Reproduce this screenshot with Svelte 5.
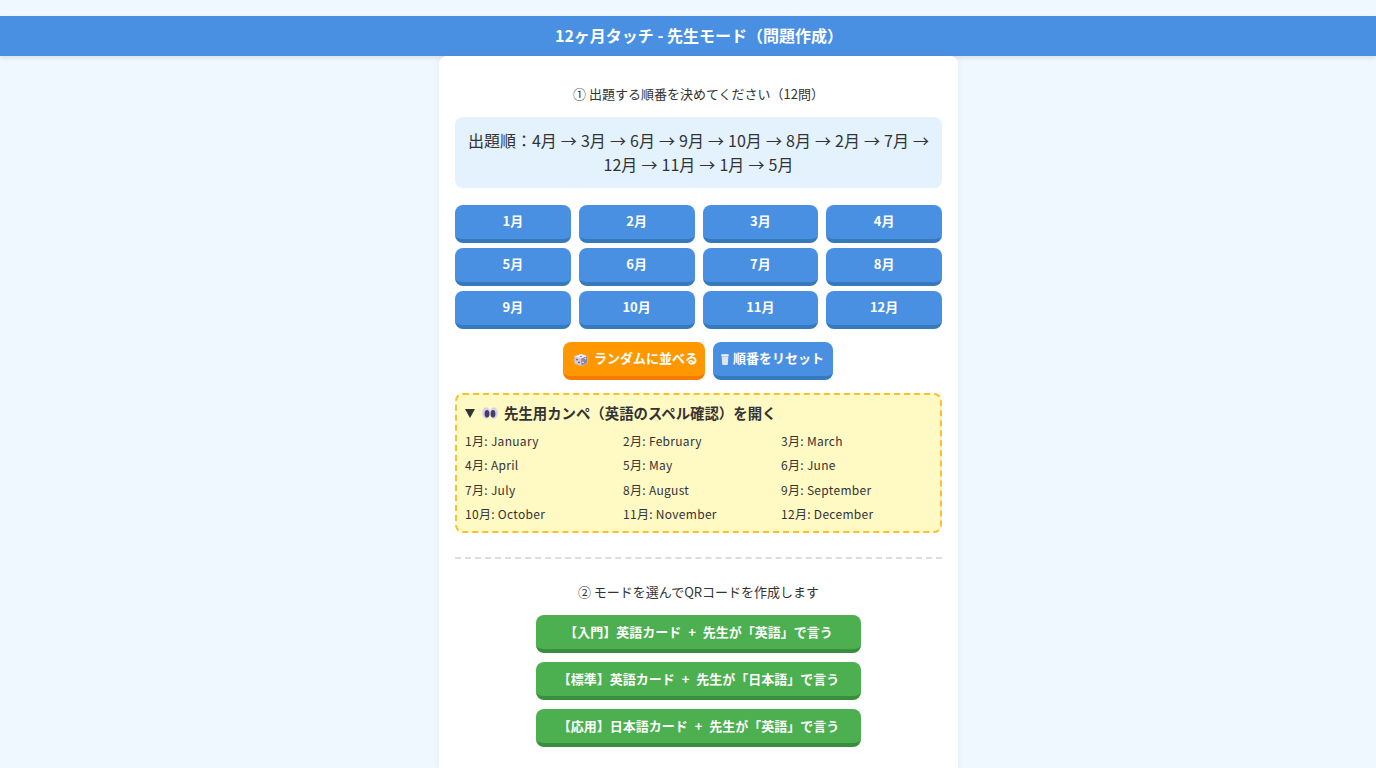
<script>
    const months = ['January', 'February', 'March', 'April', 'May', 'June', 'July', 'August', 'September', 'October', 'November', 'December']
    const order = [4, 3, 6, 9, 10, 8, 2, 7, 12, 11, 1, 5]
    const modes = [
        '【入門】英語カード + 先生が「英語」で言う',
        '【標準】英語カード + 先生が「日本語」で言う',
        '【応用】日本語カード + 先生が「英語」で言う'
    ]
</script>

<header class="bar">12ヶ月タッチ - 先生モード（問題作成）</header>

<main class="card">
    <p class="step">① 出題する順番を決めてください（12問）</p>
    <div class="order">出題順：{order.map((m) => m + '月').join(' → ')}</div>

    <div class="months">
        {#each months as _, i}
            <button class="btn month">{i + 1}月</button>
        {/each}
    </div>

    <div class="actions">
        <button class="btn action orange">
            <svg class="emoji" viewBox="0 0 14 12">
                <path d="M7 .3 13 2.2 13.3 8.6 7.4 11.8 1 9.2.7 2.4Z" fill="#cfc9da" stroke="#cfc9da" stroke-linejoin="round" />
                <path d="M7 .3 13 2.2 7.2 4.6.7 2.4Z" fill="#f2eff6" />
                <path d="M7.2 4.6 13 2.2 13.3 8.6 7.4 11.8Z" fill="#8f86a0" />
                <ellipse cx="7" cy="2.4" rx="1.2" ry=".7" fill="#e0636d" />
                <circle cx="3" cy="5.6" r=".8" fill="#5a5068" />
                <circle cx="5" cy="8.4" r=".8" fill="#5a5068" />
                <circle cx="11.4" cy="4.6" r=".8" fill="#f4f2f7" />
                <circle cx="9" cy="8.2" r=".8" fill="#f4f2f7" />
            </svg>
            <span>ランダムに並べる</span>
        </button>
        <button class="btn action blue">
            <svg class="emoji can" viewBox="0 0 8 11">
                <rect x=".2" y=".2" width="7.6" height="2.2" rx=".8" fill="#f1f4f7" />
                <path d="M.7 2.8h6.6l-.5 7.4a.7.7 0 0 1-.7.7H1.9a.7.7 0 0 1-.7-.7Z" fill="#dde6ef" />
            </svg>
            <span>順番をリセット</span>
        </button>
    </div>

    <div class="cheat">
        <div class="cheat-title">
            <span class="tri"></span>
            <svg class="emoji eyes" viewBox="0 0 16 12">
                <ellipse cx="4.2" cy="6" rx="4" ry="5.8" fill="#d9cdec" />
                <ellipse cx="11.8" cy="6" rx="4" ry="5.8" fill="#d9cdec" />
                <ellipse cx="5" cy="6.8" rx="2.4" ry="3.8" fill="#453d66" />
                <ellipse cx="11" cy="6.8" rx="2.4" ry="3.8" fill="#453d66" />
            </svg>
            先生用カンペ（英語のスペル確認）を開く
        </div>
        <div class="spell">
            {#each months as name, i}
                <div>{i + 1}月: {name}</div>
            {/each}
        </div>
    </div>

    <hr />

    <p class="step second">② モードを選んでQRコードを作成します</p>
    <div class="modes">
        {#each modes as label}
            <button class="btn mode">{label}</button>
        {/each}
    </div>
</main>

<style>
    :global(body) {
        background: #f0f8ff;
        font-family: "Noto Sans CJK JP", "Noto Sans", sans-serif;
        color: #333;
    }

    .bar {
        box-sizing: border-box;
        margin-top: 16px;
        height: 40px;
        padding-left: 22px;
        line-height: 39px;
        background: #4a90e2;
        color: white;
        font-size: 16px;
        font-weight: 700;
        text-align: center;
        box-shadow: 0 2px 4px rgba(0, 0, 0, 0.1);
    }

    .card {
        box-sizing: border-box;
        width: 519px;
        min-height: calc(100vh - 56px);
        margin-left: 439px;
        padding: 16px;
        background: white;
        border-radius: 8px 8px 0 0;
        box-shadow: 0 0 8px rgba(0, 0, 0, 0.05);
    }

    .step {
        margin: 12px 0 13px;
        font-size: 13px;
        line-height: 20px;
        text-align: center;
    }

    .order {
        padding: 10.5px 12px 12.5px;
        background: #e3f2fd;
        border-radius: 8px;
        font-size: 16px;
        line-height: 24px;
        word-spacing: 0.5px;
        text-align: center;
    }

    .btn {
        border: 0;
        border-bottom: 4px solid #357abd;
        border-radius: 8px;
        background: #4a90e2;
        color: white;
        font-family: inherit;
        font-weight: 700;
        font-size: 13px;
        padding: 0;
    }

    .months {
        display: grid;
        grid-template-columns: repeat(4, 1fr);
        gap: 5px 8px;
        margin-top: 17px;
    }

    .month {
        height: 38px;
        padding-bottom: 4px;
    }

    .actions {
        display: flex;
        justify-content: center;
        gap: 8px;
        margin-top: 13px;
        padding-right: 1px;
    }

    .action {
        display: flex;
        align-items: center;
        height: 38px;
        padding-bottom: 4px;
    }

    .orange {
        width: 142px;
        padding-left: 11px;
        gap: 6px;
        background: #ff9800;
        border-bottom-color: #f57c00;
    }

    .blue {
        width: 120px;
        padding-left: 8px;
        gap: 4px;
    }

    .emoji {
        display: block;
        width: 14px;
        height: 12px;
        margin-top: 5px;
    }

    .emoji.can {
        width: 8px;
        height: 11px;
    }

    .emoji.eyes {
        width: 16px;
        height: 12px;
        margin: 0 6px 0 7px;
    }

    .cheat {
        margin-top: 13px;
        padding: 6px 8px;
        height: 140px;
        box-sizing: border-box;
        background: #fff9c4;
        border: 2px dashed #fbc02d;
        border-radius: 8px;
    }

    .cheat-title {
        display: flex;
        align-items: center;
        font-size: 14.4px;
        font-weight: 700;
        line-height: 24px;
    }

    .tri {
        width: 0;
        height: 0;
        border-left: 5px solid transparent;
        border-right: 5px solid transparent;
        border-top: 9px solid #333;
    }

    .spell {
        display: grid;
        grid-template-columns: repeat(3, 158px);
        grid-auto-rows: 24.5px;
        align-items: center;
        margin-top: 3px;
        font-size: 12px;
        letter-spacing: 0.3px;
    }

    hr {
        margin: 24px 0 0;
        border: 0;
        border-top: 2px dashed #ddd;
    }

    .second {
        margin: 23px 0 13px;
    }

    .modes {
        display: flex;
        flex-direction: column;
        align-items: center;
        gap: 9px;
    }

    .mode {
        width: 325px;
        height: 38px;
        padding-bottom: 2px;
        word-spacing: 4px;
        background: #4caf50;
        border-bottom-color: #388e3c;
    }
</style>
